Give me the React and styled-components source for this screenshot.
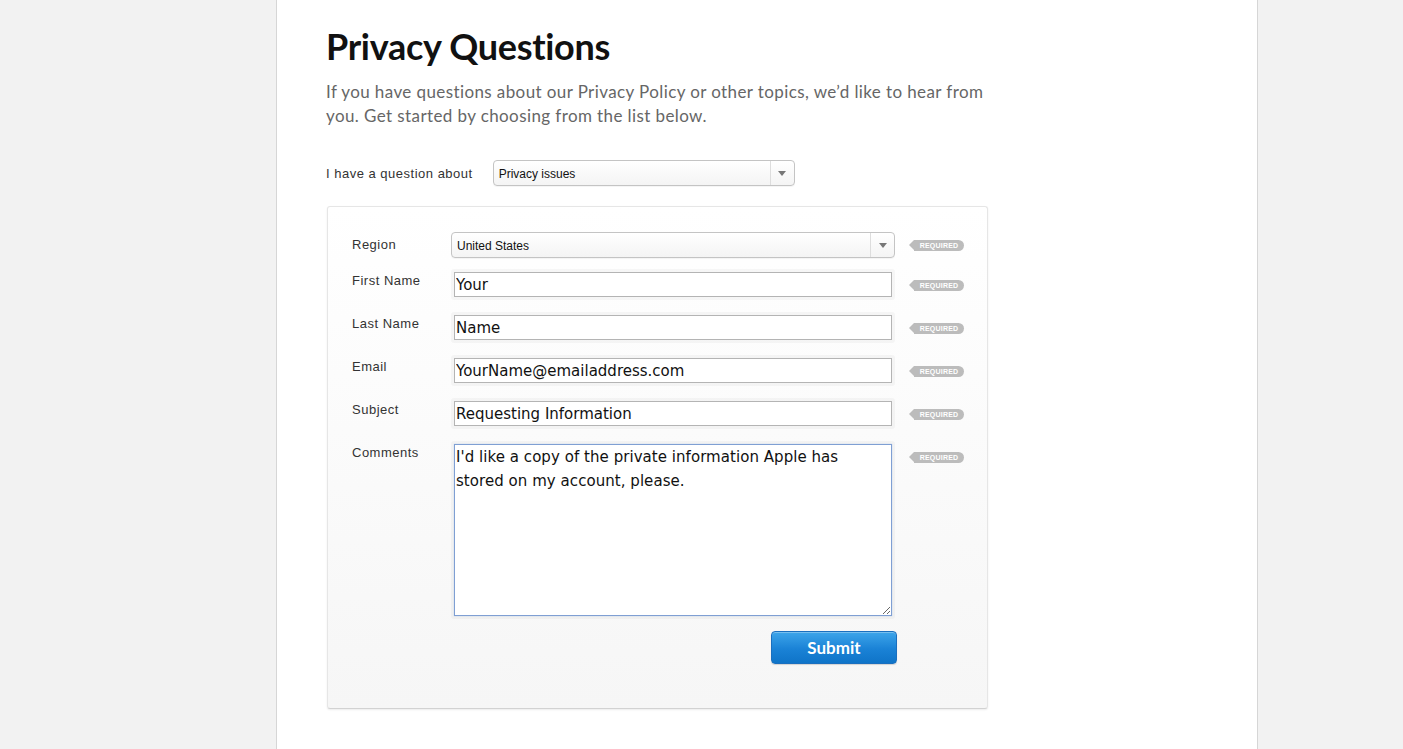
import React from "react";
import styled, { createGlobalStyle } from "styled-components";

const GlobalStyle = createGlobalStyle`
  html, body {
    margin: 0;
    padding: 0;
    background: #f2f2f2;
    font-family: "Liberation Sans", Arial, sans-serif;
  }
`;

const Page = styled.div`
  margin-left: 276px;
  width: 982px;
  min-height: 100vh;
  background: #fff;
  border-left: 1px solid #d6d6d6;
  border-right: 1px solid #d6d6d6;
  padding: 24px 0 40px 49px;
  box-sizing: border-box;
`;

const Heading = styled.h1`
  margin: 0;
  font-family: Lato, "Liberation Sans", sans-serif;
  font-weight: 700;
  font-size: 36px;
  line-height: 44px;
  color: #111;
  letter-spacing: -0.3px;
`;

const Intro = styled.p`
  margin: 12px 0 0;
  width: 680px;
  font-family: Lato, "Liberation Sans", sans-serif;
  font-size: 17px;
  line-height: 24px;
  color: #666;
  letter-spacing: 0.4px;
`;

const TopicRow = styled.div`
  display: flex;
  align-items: center;
  gap: 20px;
  margin-top: 32px;
  font-size: 13px;
  letter-spacing: 0.5px;
  color: #333;
`;

const SelectBox = styled.div`
  display: flex;
  align-items: stretch;
  width: ${(p) => p.$width}px;
  height: ${(p) => p.$height}px;
  box-sizing: border-box;
  border: 1px solid #c4c4c4;
  border-radius: 4px;
  background: linear-gradient(#ffffff, #f4f4f4);
  box-shadow: 0 1px 0 rgba(0, 0, 0, 0.04);
  font-size: 12px;
  letter-spacing: 0;
  color: #111;
`;

const SelectValue = styled.span`
  flex: 1;
  display: flex;
  align-items: center;
  padding-left: 5px;
  padding-top: 1px;
`;

const SelectArrow = styled.span`
  width: 23px;
  border-left: 1px solid #ddd;
  display: flex;
  align-items: center;
  justify-content: center;
  &::after {
    content: "";
    border-left: 4px solid transparent;
    border-right: 4px solid transparent;
    border-top: 5px solid #777;
    margin-top: 1px;
  }
`;

const Card = styled.div`
  margin: 20px 0 0 1px;
  width: 661px;
  box-sizing: border-box;
  padding: 25px 24px 44px 24px;
  border: 1px solid #e6e6e6;
  border-bottom-color: #d2d2d2;
  border-radius: 3px;
  background: linear-gradient(#ffffff, #f6f6f6);
  box-shadow: 0 1px 2px rgba(0, 0, 0, 0.08);
  display: flex;
  flex-direction: column;
  gap: 12px;
`;

const Row = styled.div`
  display: grid;
  grid-template-columns: 99px 444px 69px;
  align-items: start;
  margin-bottom: ${(p) => p.$after || 0}px;
`;

const Label = styled.div`
  font-size: 13px;
  line-height: 16px;
  letter-spacing: 0.5px;
  color: #333;
  padding-top: ${(p) => p.$top}px;
`;

const Required = styled.div`
  margin-top: ${(p) => p.$top}px;
  position: relative;
  height: 11px;
  width: 50px;
  margin-left: 19px;
  background: #bcbcbc;
  border-radius: 0 6px 6px 0;
  color: #fff;
  font-size: 7px;
  font-weight: 700;
  letter-spacing: 0.2px;
  line-height: 11px;
  text-align: center;
  &::before {
    content: "";
    position: absolute;
    left: -5px;
    top: 0;
    border-top: 5.5px solid transparent;
    border-bottom: 5.5px solid transparent;
    border-right: 5px solid #bcbcbc;
  }
`;

const FieldFrame = styled.div`
  padding: 3px;
  border-radius: 3px;
  background: rgba(0, 0, 0, 0.03);
`;

const TextInput = styled.input`
  display: block;
  width: 100%;
  height: 25px;
  box-sizing: border-box;
  border: 1px solid #b4b4b4;
  background: #fff;
  padding: 0 1px;
  font-family: "DejaVu Sans", Verdana, sans-serif;
  font-size: 15px;
  color: #111;
  outline: none;
`;

const TextArea = styled.textarea`
  display: block;
  width: 100%;
  height: 172px;
  box-sizing: border-box;
  border: 1px solid #7f9fd3;
  box-shadow: 0 0 1px #a8c0e6;
  background: #fff;
  padding: 0 30px 0 1px;
  margin: 0;
  font-family: "DejaVu Sans", Verdana, sans-serif;
  font-size: 15px;
  letter-spacing: 0.05px;
  line-height: 24px;
  color: #111;
  outline: none;
  resize: vertical;
`;

const ButtonRow = styled.div`
  display: flex;
  justify-content: flex-end;
  margin: 12px -2px 0 0;
`;

const SubmitButton = styled.button`
  width: 126px;
  height: 33px;
  border: 1px solid #1a6fbf;
  border-radius: 4px;
  background: linear-gradient(#3da5ea, #1a82d6 55%, #0f74c8);
  box-shadow: inset 0 1px 0 rgba(255, 255, 255, 0.3), 0 1px 1px rgba(0, 0, 0, 0.15);
  color: #fff;
  font-family: Lato, "Liberation Sans", sans-serif;
  font-weight: 700;
  font-size: 17px;
  cursor: pointer;
`;

const fields = [
  { label: "First Name", value: "Your" },
  { label: "Last Name", value: "Name" },
  { label: "Email", value: "YourName@emailaddress.com" },
  { label: "Subject", value: "Requesting Information" },
];

export default function App() {
  return (
    <>
      <GlobalStyle />
      <Page>
        <Heading>Privacy Questions</Heading>
        <Intro>
          If you have questions about our Privacy Policy or other topics, we’d like to hear from
          you. Get started by choosing from the list below.
        </Intro>
        <TopicRow>
          <span>I have a question about</span>
          <SelectBox $width={302} $height={26}>
            <SelectValue>Privacy issues</SelectValue>
            <SelectArrow />
          </SelectBox>
        </TopicRow>
        <Card>
          <Row $after={-1}>
            <Label $top={5}>Region</Label>
            <SelectBox $width={444} $height={26}>
              <SelectValue>United States</SelectValue>
              <SelectArrow />
            </SelectBox>
            <Required $top={8}>REQUIRED</Required>
          </Row>
          {fields.map((f) => (
            <Row key={f.label}>
              <Label $top={4}>{f.label}</Label>
              <FieldFrame>
                <TextInput defaultValue={f.value} />
              </FieldFrame>
              <Required $top={11}>REQUIRED</Required>
            </Row>
          ))}
          <Row>
            <Label $top={4}>Comments</Label>
            <div>
              <FieldFrame>
                <TextArea defaultValue="I'd like a copy of the private information Apple has stored on my account, please." />
              </FieldFrame>
              <ButtonRow>
                <SubmitButton>Submit</SubmitButton>
              </ButtonRow>
            </div>
            <Required $top={11}>REQUIRED</Required>
          </Row>
        </Card>
      </Page>
    </>
  );
}
